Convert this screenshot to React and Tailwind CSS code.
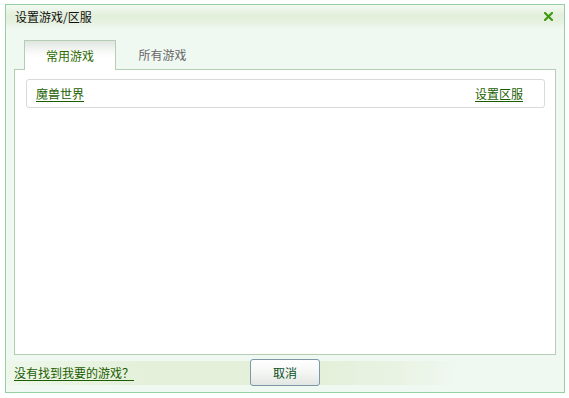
export default function App() {
  const font = { fontFamily: '"Noto Sans CJK SC", "Noto Sans", sans-serif' };
  return (
    <div className="w-[569px] h-[398px] bg-white pt-[4px] pl-[5px]" style={font}>
      <div className="w-[560px] h-[389px] border border-[#94d0a4] bg-[#f0f8f2] flex flex-col">
        {/* title bar */}
        <div className="h-[24px] flex items-center justify-between pl-[9px] pr-[11px] bg-[linear-gradient(to_bottom,#f4f9f2_0%,#e2efda_45%,#e6f1df_70%,#f0f8f2_100%)]">
          <span className="text-[12px] leading-none text-[#111]">设置游戏/区服</span>
          <svg width="9" height="9" viewBox="0 0 9 9" className="mt-[-1px]">
            <path d="M1 1 L8 8 M8 1 L1 8" stroke="#3f9a12" strokeWidth="2.2" strokeLinecap="square" />
          </svg>
        </div>
        {/* tabs */}
        <div className="mt-[11px] ml-[18px] flex items-end relative z-10 -mb-px">
          <div className="w-[92px] h-[30px] border border-b-0 border-[#b5cdb5] bg-[linear-gradient(to_bottom,#dfe5df_0%,#f6f8f6_35%,#ffffff_60%)] flex items-center justify-center text-[12px] text-[#2d6b00]">
            常用游戏
          </div>
          <div className="w-[93px] h-[30px] flex items-center justify-center text-[12px] text-[#666]">
            所有游戏
          </div>
        </div>
        {/* panel */}
        <div className="mx-[8px] h-[286px] border border-[#b5cdb5] bg-white pt-[9px] pl-[11px] pr-[10px]">
          <div className="h-[29px] border border-[#dadada] rounded-[3px] flex items-center justify-between pl-[9px] pr-[21px]">
            <a className="text-[12px] text-[#1b5e00] underline underline-offset-2 cursor-pointer">魔兽世界</a>
            <a className="text-[12px] text-[#1b5e00] underline underline-offset-2 cursor-pointer">设置区服</a>
          </div>
        </div>
        {/* bottom */}
        <div className="mt-[4px] h-[27px] relative flex items-center">
          <div className="absolute left-0 top-[2px] h-[24px] w-[455px] bg-[linear-gradient(to_right,#eef7ea_0%,#e4f0da_30%,#e4f0da_70%,#eaf3e4_88%,#f0f8f2_100%)]" />
          <a className="relative ml-[8px] text-[12px] text-[#1b5e00] underline underline-offset-2 cursor-pointer">没有找到我要的游戏？</a>
          <button className="absolute left-[244px] top-0 w-[70px] h-[27px] border border-[#7c98a8] rounded-[3px] bg-[linear-gradient(to_bottom,#ffffff_0%,#f4f6f4_50%,#e2e6e2_100%)] text-[12px] text-[#0a4f1e] flex items-center justify-center">
            取消
          </button>
        </div>
      </div>
    </div>
  );
}
